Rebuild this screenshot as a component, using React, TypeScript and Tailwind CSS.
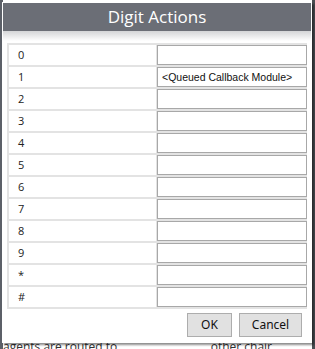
import React from 'react'

const digits = ['0', '1', '2', '3', '4', '5', '6', '7', '8', '9', '*', '#']

const values: Record<string, string> = {
  '1': '<Queued Callback Module>',
}

const DigitRow = ({ digit }: { digit: string }) => (
  <div className="flex h-[20px] gap-x-[1px]">
    <div className="w-[147px] bg-white pl-[9px] text-[11px] leading-[20px] text-[#222]">
      {digit}
    </div>
    <div className="flex-1 border border-[#a8a8a8] bg-white pl-[4px] text-[10.5px] leading-[18px] text-[#111] font-['Liberation_Sans',sans-serif]">
      {values[digit] ?? ''}
    </div>
  </div>
)

export default function App() {
  return (
    <div className="relative h-[349px] w-[315px] overflow-hidden bg-white font-['Open_Sans',sans-serif]">
      {/* page behind the dialog */}
      <div className="flex h-full">
        <div className="w-[3px] bg-[#5c6068]" />
        <div className="flex flex-1 flex-col justify-end">
          <div className="flex justify-between text-[12px] leading-[12px] text-[#333] translate-y-[4px]">
            <span>agents are routed to</span>
            <span className="pr-[40px]">other chair</span>
          </div>
        </div>
        <div className="w-[3px] bg-[#4a4d52]" />
      </div>

      {/* dialog */}
      <div className="absolute left-[2px] top-[2px] h-[341px] w-[310px] border border-white bg-white shadow-[2px_2px_2px_rgba(0,0,0,0.45)]">
        <div className="flex h-[28px] items-center justify-center bg-[#6b6e76] text-[17px] text-white">
          Digit Actions
        </div>
        <div className="h-[10px] bg-gradient-to-b from-[#d4d5d7] to-white" />

        <div className="ml-[4px] mt-[2px] mr-[4px] flex flex-col gap-y-[2px] bg-[#e3e3e3] pl-[2px] pt-[2px] pb-[2px]">
          {digits.map(d => (
            <DigitRow key={d} digit={d} />
          ))}
        </div>

        <div className="mt-[4px] mr-[9px] flex justify-end gap-[7px] font-['Noto_Sans',sans-serif] text-[12px] text-[#111]">
          <button className="h-[24px] w-[45px] border border-[#adadad] bg-[#e1e1e1]">OK</button>
          <button className="h-[24px] w-[63px] border border-[#adadad] bg-[#e1e1e1]">Cancel</button>
        </div>
      </div>
    </div>
  )
}
